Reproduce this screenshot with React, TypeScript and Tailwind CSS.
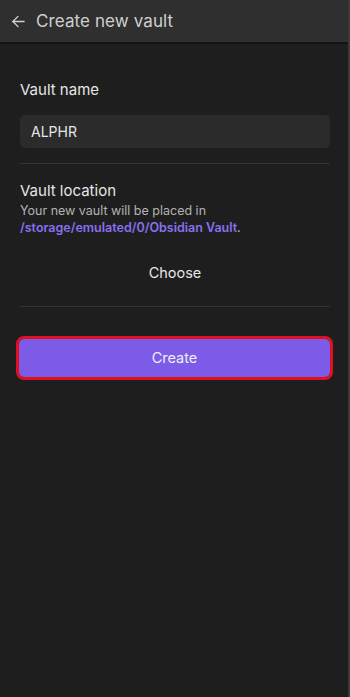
import React from "react";

export default function App() {
  return (
    <div
      className="w-[350px] h-[697px] bg-[#1e1e1e] flex flex-col border-r-[2px] border-[#3a3a3a] overflow-hidden"
      style={{ fontFamily: "Inter, 'Noto Sans', sans-serif" }}
    >
      <div className="h-[44px] bg-[#2f2f2f] border-b-[2px] border-[#141414] flex items-center pl-[11px] gap-[10px] shrink-0">
        <svg width="15" height="15" viewBox="0 0 16 16" fill="none" stroke="#cfcfcf" strokeWidth="1.4" strokeLinecap="round" strokeLinejoin="round">
          <path d="M14 8H2" />
          <path d="M7.5 2.5L2 8l5.5 5.5" />
        </svg>
        <span className="text-[17px] text-[#cfcfcf] leading-none tracking-[0.1px]">Create new vault</span>
      </div>
      <div className="pl-[20px] pr-[18px] flex flex-col">
        <div className="text-[15px] text-[#e6e6e6] mt-[36px] leading-[20px]">Vault name</div>
        <div className="mt-[15px] h-[33px] rounded-[5px] bg-[#2b2b2b] flex items-center px-[11px] text-[14px] text-[#e6e6e6]">
          ALPHR
        </div>
        <div className="mt-[15px] h-px bg-[#333333]" />
        <div className="text-[15px] text-[#e6e6e6] mt-[17px] leading-[20px]">Vault location</div>
        <div className="text-[12.5px] text-[#b3b3b3] leading-[17px] mt-[1px]">
          Your new vault will be placed in
          <br />
          <span className="text-[#8a6ff0] font-semibold">/storage/emulated/0/Obsidian Vault</span>.
        </div>
        <div className="mt-[27px] text-center text-[14.5px] text-[#e6e6e6] leading-[20px]">Choose</div>
        <div className="mt-[23px] h-px bg-[#333333]" />
        <div className="mt-[29px] ml-[-4px] mr-[-3px] rounded-[8px] border-[3px] border-[#e0101c]">
          <div className="h-[38px] rounded-[5px] bg-[#7b5be8] flex items-center justify-center text-[14.5px] text-[#f0f0f0]">
            Create
          </div>
        </div>
      </div>
    </div>
  );
}
